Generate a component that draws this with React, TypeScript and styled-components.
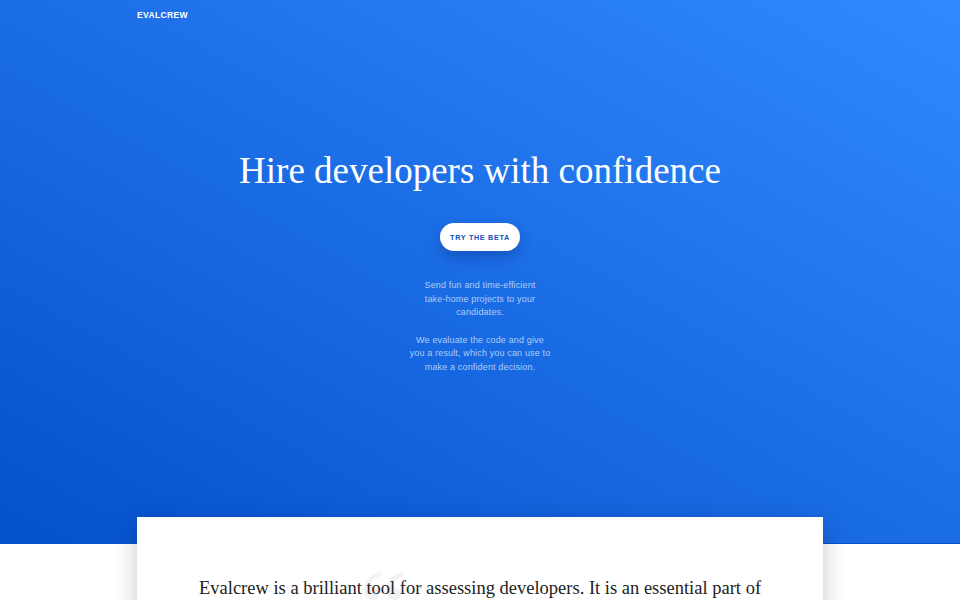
import styled, { createGlobalStyle } from 'styled-components'

const GlobalStyle = createGlobalStyle`
  html, body {
    margin: 0;
    padding: 0;
    background: #ffffff;
  }
  * {
    box-sizing: border-box;
  }
`

const Page = styled.div`
  width: 100%;
  height: 600px;
  overflow: hidden;
  font-family: 'Liberation Sans', Arial, sans-serif;
`

const Hero = styled.header`
  height: 544px;
  background: linear-gradient(to top right, #0351cc 0%, #1b6de6 50%, #3189ff 100%);
  border-bottom: 1px solid #0a4fd0;
  display: flex;
  flex-direction: column;
  align-items: center;
`

const Nav = styled.nav`
  width: 686px;
  padding-top: 3px;
  line-height: 20px;
`

const Logo = styled.span`
  color: #ffffff;
  font-weight: bold;
  font-size: 8.5px;
  letter-spacing: 0.35px;
`

const HeroBody = styled.div`
  display: flex;
  flex-direction: column;
  align-items: center;
  padding-top: 121px;
`

const Title = styled.h1`
  margin: 0;
  color: #ffffff;
  font-family: 'Liberation Serif', 'Times New Roman', serif;
  font-weight: normal;
  font-size: 37px;
  line-height: 50px;
`

const BetaButton = styled.button`
  margin-top: 27px;
  width: 80px;
  height: 28px;
  border: none;
  border-radius: 14px;
  background: #ffffff;
  color: #0d4fbf;
  font-family: 'Liberation Sans', Arial, sans-serif;
  font-weight: bold;
  font-size: 7.2px;
  letter-spacing: 0.7px;
  box-shadow: 0 6px 14px rgba(0, 30, 100, 0.3);
  cursor: pointer;
`

const Blurb = styled.div`
  margin-top: 28px;
  width: 170px;
  display: flex;
  flex-direction: column;
  gap: 14px;
`

const BlurbText = styled.p`
  margin: 0;
  text-align: center;
  color: #b0ccf4;
  font-size: 9px;
  letter-spacing: 0.15px;
  line-height: 13.5px;
`

const Card = styled.section`
  position: relative;
  width: 686px;
  margin: -27px auto 0;
  background: #ffffff;
  box-shadow: 0 6px 22px rgba(0, 0, 0, 0.22);
  padding: 56px 40px 40px 62px;
`

const QuoteMark = styled.span`
  position: absolute;
  left: 222px;
  top: 36px;
  font-family: 'Liberation Serif', serif;
  font-size: 110px;
  line-height: 1;
  color: #f2f2f2;
  pointer-events: none;
`

const CardText = styled.p`
  position: relative;
  margin: 0;
  font-family: 'Liberation Serif', 'Times New Roman', serif;
  font-size: 18.5px;
  line-height: 30px;
  color: #222222;
`

const App = () => {
  return (
    <Page>
      <GlobalStyle />
      <Hero>
        <Nav>
          <Logo>EVALCREW</Logo>
        </Nav>
        <HeroBody>
          <Title>Hire developers with confidence</Title>
          <BetaButton type="button">TRY THE BETA</BetaButton>
          <Blurb>
            <BlurbText>
              Send fun and time-efficient
              <br />
              take-home projects to your
              <br />
              candidates.
            </BlurbText>
            <BlurbText>
              We evaluate the code and give
              <br />
              you a result, which you can use to
              <br />
              make a confident decision.
            </BlurbText>
          </Blurb>
        </HeroBody>
      </Hero>
      <Card>
        <QuoteMark>“</QuoteMark>
        <CardText>
          Evalcrew is a brilliant tool for assessing developers. It is an essential part of our
          hiring process and saves us a lot of time.
        </CardText>
      </Card>
    </Page>
  )
}

export default App
